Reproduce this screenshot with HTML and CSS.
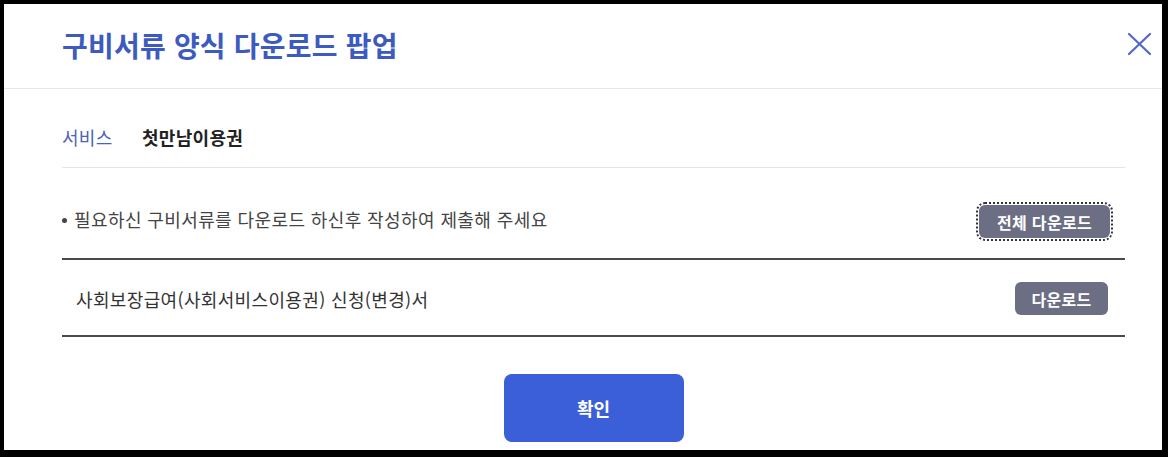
FILE: index.html
```html
<!DOCTYPE html>
<html lang="ko">
<head>
<meta charset="utf-8">
<title>구비서류 양식 다운로드 팝업</title>
<link rel="stylesheet" href="styles.css">
</head>
<body>
<div class="popup">
  <div class="popup-head">
    <h1 class="popup-title">구비서류 양식 다운로드 팝업</h1>
    <button class="close-btn" aria-label="닫기">
      <svg width="26" height="26" viewBox="0 0 26 26"><path d="M3 3 L24 23 M24 3 L3 23" stroke="#5068c8" stroke-width="2.2" fill="none" stroke-linecap="round"/></svg>
    </button>
  </div>
  <div class="popup-body">
    <div class="service-row">
      <span class="service-label">서비스</span>
      <span class="service-name">첫만남이용권</span>
    </div>
    <div class="guide-row">
      <p class="guide-text">필요하신 구비서류를 다운로드 하신후 작성하여 제출해 주세요</p>
      <button class="btn-gray btn-all">전체 다운로드</button>
    </div>
    <ul class="doc-list">
      <li class="doc-item">
        <span class="doc-name">사회보장급여(사회서비스이용권) 신청(변경)서</span>
        <button class="btn-gray btn-one">다운로드</button>
      </li>
    </ul>
    <div class="actions">
      <button class="btn-confirm">확인</button>
    </div>
  </div>
</div>
</body>
</html>
```
FILE: styles.css
```css
* { box-sizing: border-box; }
html, body { margin: 0; padding: 0; }
body {
  background: #000;
  width: 1168px;
  height: 457px;
  overflow: hidden;
  font-family: "Noto Sans CJK KR", "Noto Sans", sans-serif;
  padding: 4px 6px 7px 4px;
}
.popup {
  background: #fff;
  height: 446px;
  overflow: hidden;
}
.popup-head {
  height: 85px;
  border-bottom: 1px solid #e6e6e6;
  display: flex;
  align-items: center;
  justify-content: space-between;
  padding: 0 10px 0 58px;
}
.popup-title {
  margin: 0;
  font-size: 28px;
  font-weight: 700;
  color: #3d5bbf;
  letter-spacing: 0.2px;
  line-height: 1;
  padding-bottom: 2px;
}
.close-btn {
  border: 0;
  background: none;
  padding: 0;
  width: 26px;
  height: 26px;
  margin-bottom: 4px;
  cursor: pointer;
}
.close-btn svg { display: block; }
.popup-body {
  padding: 0 37px 0 58px;
}
.service-row {
  display: flex;
  align-items: center;
  padding: 36px 0 18px;
  border-bottom: 1px solid #e4e4e4;
  line-height: 24px;
  font-size: 18px;
  letter-spacing: 0.3px;
}
.service-label {
  color: #4a63b8;
  width: 80px;
}
.service-name {
  color: #222;
  font-weight: 700;
}
.guide-row {
  display: flex;
  align-items: center;
  justify-content: space-between;
  padding: 37px 15px 20px 0;
}
.guide-text {
  margin: 0 0 5px;
  font-size: 18px;
  color: #444;
  line-height: 24px;
  letter-spacing: 0.4px;
}
.guide-text::before {
  content: "";
  display: inline-block;
  width: 5px;
  height: 5px;
  border-radius: 50%;
  background: #444;
  vertical-align: middle;
  margin: 0 7px 4px 0;
}
.btn-gray {
  border: 0;
  border-radius: 6px;
  background: #6c6e83;
  color: #fff;
  font-family: inherit;
  font-weight: 700;
  font-size: 16px;
  letter-spacing: 0.3px;
  height: 33px;
  padding: 0;
}
.btn-all {
  width: 131px;
  outline: 2px dotted #333;
  outline-offset: 1px;
}
.btn-one {
  width: 93px;
}
.doc-list {
  list-style: none;
  margin: 0;
  padding: 0;
  border-top: 2px solid #4a4a4a;
  border-bottom: 2px solid #4a4a4a;
}
.doc-item {
  display: flex;
  align-items: center;
  justify-content: space-between;
  padding: 22px 17px 20px 14px;
}
.doc-name {
  font-size: 18px;
  color: #333;
  letter-spacing: 0.35px;
  line-height: 24px;
}
.actions {
  display: flex;
  justify-content: center;
  padding-top: 37px;
}
.btn-confirm {
  width: 180px;
  height: 68px;
  border: 0;
  border-radius: 8px;
  background: #3b5fd8;
  color: #fff;
  font-family: inherit;
  font-size: 18px;
  font-weight: 700;
}
```
